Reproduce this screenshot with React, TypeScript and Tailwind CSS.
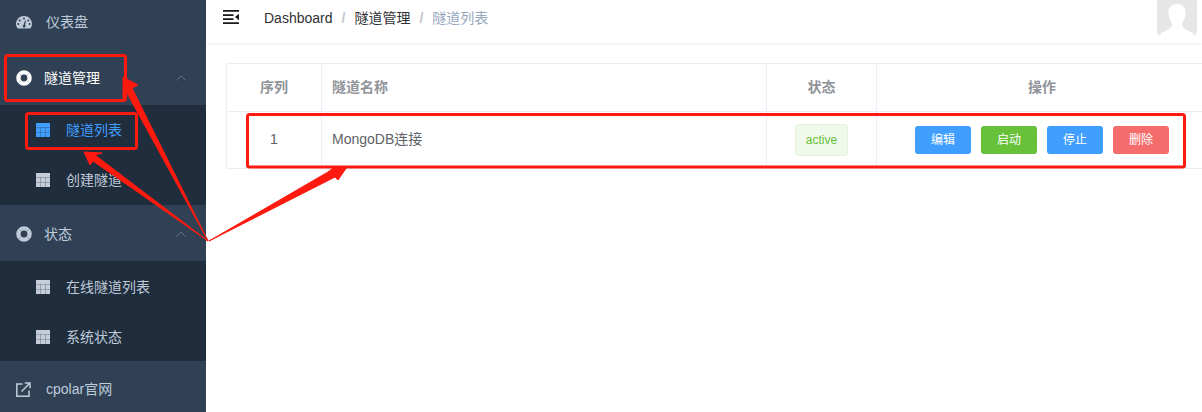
const cjk = "font-['Liberation_Sans','Noto_Sans_CJK_SC',sans-serif]"

function GaugeIcon() {
  return (
    <svg width="16" height="13" viewBox="0 0 16 13" className="shrink-0">
      <path
        fill="currentColor"
        fillRule="evenodd"
        d="M8 0C3.6 0 0 3.4 0 7.8c0 1.6.5 3 1.3 4.2.2.3.5.5.9.5h11.6c.4 0 .7-.2.9-.5.8-1.2 1.3-2.6 1.3-4.2C16 3.4 12.4 0 8 0ZM8 1.6a1 1 0 1 1 0 2 1 1 0 0 1 0-2ZM3.7 3.4a1 1 0 1 1 0 2 1 1 0 0 1 0-2ZM2.3 7a1 1 0 1 1 0 2 1 1 0 0 1 0-2Zm11.4 0a1 1 0 1 1 0 2 1 1 0 0 1 0-2Zm-1.4-3.6a1 1 0 1 1 0 2 1 1 0 0 1 0-2ZM10 4.8 9 9a1.4 1.4 0 1 1-1.5-.1L9 4.6l1 .2Z"
      />
    </svg>
  )
}

function RingIcon() {
  return (
    <svg width="16" height="16" viewBox="0 0 16 16" className="shrink-0">
      <circle cx="8" cy="8" r="5.600" fill="none" stroke="currentColor" strokeWidth="4.400" />
      <path d="M2.400 2.400 4.800 4.800M13.600 2.400 11.200 4.800M2.400 13.600 4.800 11.200M13.600 13.600 11.200 11.200" stroke="#304156" strokeWidth="1" opacity="0.3" />
    </svg>
  )
}

function TableIcon() {
  return (
    <svg width="14" height="14" viewBox="0 0 14 14" className="shrink-0">
      <rect width="14" height="14" fill="currentColor" opacity="0.45" />
      <path
        fill="currentColor"
        d="M0 0h14v4H0zM0 4.500h4.300v4.500H0zM4.800 4.500h4.400v4.500H4.800zM9.700 4.500H14v4.500H9.700zM0 9.500h4.300V14H0zM4.800 9.500h4.400V14H4.800zM9.700 9.500H14V14H9.700z"
      />
    </svg>
  )
}

function LinkIcon() {
  return (
    <svg width="15" height="15" viewBox="0 0 15 15" fill="none" stroke="currentColor" strokeWidth="1.500" className="shrink-0">
      <path d="M6.500 2H.8v12.200H13V8.500" />
      <path d="M5.500 9.500 13.500 1.500M8.800 1h5.200v5.200" />
    </svg>
  )
}

function Chevron() {
  return (
    <svg width="10" height="6" viewBox="0 0 10 6" className="ml-auto shrink-0 text-[#66717f]">
      <path d="M.5 5.500 5 1l4.500 4.500" fill="none" stroke="currentColor" strokeWidth="1" />
    </svg>
  )
}

function SubItem({ label, active, low }: { label: string; active?: boolean; low?: boolean }) {
  return (
    <div
      className={`flex h-[50px] items-center pl-9 text-sm ${low ? "pt-[2px]" : ""} ${
        active ? "text-[#409eff]" : "text-[#bfcbd9]"
      }`}
    >
      <span className={active ? "text-[#409eff]" : "text-[#c5ced8]"}>
        <TableIcon />
      </span>
      <span className="ml-[16px]">{label}</span>
    </div>
  )
}

function Sidebar() {
  return (
    <aside className="flex w-[206px] shrink-0 flex-col bg-[#304156]">
      <div className="flex h-[44px] shrink-0 items-center pl-4 text-sm text-[#bfcbd9]">
        <GaugeIcon />
        <span className="ml-[14px]">仪表盘</span>
      </div>
      <div className="mt-[7px] flex h-[54px] shrink-0 items-center pl-4 pr-5 text-sm text-white">
        <RingIcon />
        <span className="ml-3">隧道管理</span>
        <Chevron />
      </div>
      <div className="shrink-0 bg-[#1f2d3d]">
        <SubItem label="隧道列表" active />
        <SubItem label="创建隧道" />
      </div>
      <div className="flex h-[56px] shrink-0 items-center pl-4 pr-5 pt-[2px] text-sm text-[#bfcbd9]">
        <RingIcon />
        <span className="ml-3">状态</span>
        <Chevron />
      </div>
      <div className="shrink-0 bg-[#1f2d3d]">
        <SubItem label="在线隧道列表" low />
        <SubItem label="系统状态" low />
      </div>
      <div className="flex h-[56px] shrink-0 items-center pl-4 text-sm text-[#bfcbd9]">
        <LinkIcon />
        <span className="ml-[15px]">cpolar官网</span>
      </div>
    </aside>
  )
}

function Topbar() {
  return (
    <header className="flex h-[43px] items-center bg-white pl-[17px] shadow-[0_1px_4px_rgba(0,21,41,0.08)]">
      <svg width="16" height="14" viewBox="0 0 16 14" className="mb-[9px] shrink-0 text-[#1a1a1a]">
        <path fill="currentColor" d="M0 0h16v1.700H0zM0 4.300h10.500v1.700H0zM0 8.300h10.500v1.700H0zM0 12.300h16V14H0zM16 3.800v6.400L12 7z" />
      </svg>
      <nav className="ml-[25px] mb-[8px] flex items-center text-sm text-[#303133]">
        <span>Dashboard</span>
        <span className="mx-[9px] font-bold text-[#c0c4cc]">/</span>
        <span>隧道管理</span>
        <span className="mx-[9px] font-bold text-[#c0c4cc]">/</span>
        <span className="text-[#97a8be]">隧道列表</span>
      </nav>
      <div className="mb-[7px] ml-auto mr-[5px] h-[36px] w-[40px] self-end">
        <svg width="40" height="36" viewBox="0 0 40 36" className="block">
          <path fill="#e6e6e6" d="M0 0h40v31a5 5 0 0 1-5 5H5a5 5 0 0 1-5-5z" />
          <path
            fill="#fff"
            d="M20 4C26 4 29 8 28.500 14 28 19 25 22 25 25 25 28 30 30 36 33L37 36H3L4 33C10 30 15 28 15 25 15 22 12 19 11.500 14 11 8 14 4 20 4Z"
          />
        </svg>
      </div>
    </header>
  )
}

function ActionButton({ label, color }: { label: string; color: string }) {
  return (
    <button className={`h-7 w-14 shrink-0 rounded-[3px] text-xs text-white ${color}`}>{label}</button>
  )
}

function TunnelTable() {
  return (
    <div className="ml-5 mt-5 border-t border-l border-[#ebeef5] text-sm">
      <div className="flex h-[48px] border-b border-[#ebeef5] font-bold text-[#909399]">
        <div className="flex w-[95px] shrink-0 items-center justify-center border-r border-[#ebeef5] pb-[2px]">序列</div>
        <div className="flex w-[445px] shrink-0 items-center border-r border-[#ebeef5] pb-[2px] pl-[10px]">隧道名称</div>
        <div className="flex w-[110px] shrink-0 items-center justify-center border-r border-[#ebeef5] pb-[2px]">状态</div>
        <div className="flex w-[330px] shrink-0 items-center justify-center pb-[2px]">操作</div>
      </div>
      <div className="flex h-[57px] border-b border-[#ebeef5] text-[#606266]">
        <div className="flex w-[95px] shrink-0 items-center justify-center border-r border-[#ebeef5] pb-[2px]">1</div>
        <div className="flex w-[445px] shrink-0 items-center border-r border-[#ebeef5] pb-[2px] pl-[10px]">MongoDB连接</div>
        <div className="flex w-[110px] shrink-0 items-center justify-center border-r border-[#ebeef5]">
          <span className="flex h-8 w-[53px] items-center justify-center rounded border border-[#e1f3d8] bg-[#f0f9eb] text-xs text-[#67c23a]">
            active
          </span>
        </div>
        <div className="flex w-[330px] shrink-0 items-center gap-[10px] pl-[38px]">
          <ActionButton label="编辑" color="bg-[#409eff]" />
          <ActionButton label="启动" color="bg-[#67c23a]" />
          <ActionButton label="停止" color="bg-[#409eff]" />
          <ActionButton label="删除" color="bg-[#f56c6c]" />
        </div>
      </div>
    </div>
  )
}

// red markup someone drew over the screenshot
function Annotations() {
  return (
    <svg width="1202" height="412" viewBox="0 0 1202 412" className="pointer-events-none absolute top-0 left-0">
      <g fill="none" stroke="#ff1a10" strokeWidth="3">
        <rect x="5.500" y="55.500" width="120" height="45" rx="2" />
        <rect x="26.500" y="113.500" width="110" height="35" rx="2" />
        <rect x="247.500" y="114.500" width="937" height="52.500" rx="2" />
      </g>
      <g fill="#ff1a10" stroke="#ff1a10" strokeWidth="1">
        <path d="M208 241 132 88 138 85 123 77 123 101 127 93Z" />
        <path d="M208 241 95 155 102 153 84 152 90 165 93 161Z" />
        <path d="M209 241 328 172 333 168 347 167 338 180 335 177Z" />
      </g>
    </svg>
  )
}

export default function App() {
  return (
    <div className={`relative flex h-[412px] w-[1202px] overflow-hidden bg-white ${cjk}`}>
      <Sidebar />
      <main className="min-w-0 flex-1">
        <Topbar />
        <TunnelTable />
      </main>
      <Annotations />
    </div>
  )
}
